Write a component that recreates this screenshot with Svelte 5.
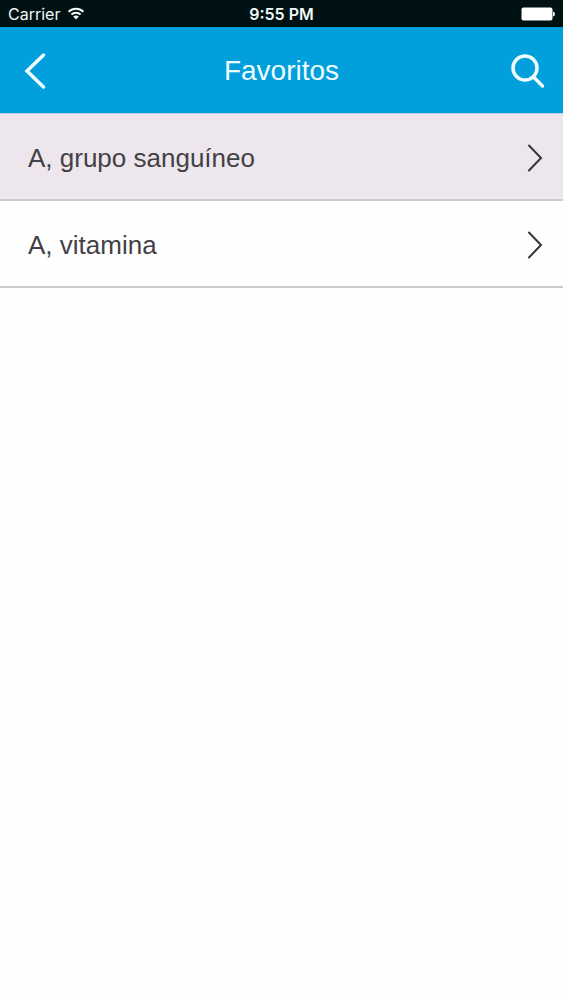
<script>
  // Lista de favoritos guardados
  let favoritos = [
    { id: 1, nombre: "A, grupo sanguíneo", activo: true },
    { id: 2, nombre: "A, vitamina", activo: false },
  ];

  let titulo = "Favoritos";
  let hora = "9:55 PM";
</script>

<div class="estado">
  <div class="operador">
    <span>Carrier</span>
    <svg class="wifi" viewBox="0 0 18 13" width="18" height="13" aria-hidden="true">
      <path d="M1.6 4.7 C5.8 0.7 12.2 0.7 16.4 4.7" />
      <path d="M4.4 7.5 C7 5.1 11 5.1 13.6 7.5" />
      <path class="punto" d="M6.2 9.5 C7.8 8.2 10.2 8.2 11.8 9.5 L9 12.5 Z" />
    </svg>
  </div>
  <span class="hora">{hora}</span>
  <svg class="bateria" viewBox="0 0 34 14" width="34" height="14" aria-hidden="true">
    <rect x="0.5" y="0.5" width="31" height="13" rx="2" />
    <path d="M32 4.5 Q34 5 34 7 Q34 9 32 9.5 Z" />
  </svg>
</div>

<header>
  <button aria-label="Volver">
    <svg viewBox="0 0 36 36" width="36" height="36">
      <path d="M26.500 2 L10 18 L26.500 34" />
    </svg>
  </button>
  <h1>{titulo}</h1>
  <button aria-label="Buscar">
    <svg viewBox="0 0 36 36" width="36" height="36">
      <circle cx="15" cy="15" r="12" />
      <path d="M23.500 24 L32.500 33" />
    </svg>
  </button>
</header>

<main>
  <ul>
    {#each favoritos as favorito (favorito.id)}
      <li>
        <a href="#{favorito.id}" class:activo={favorito.activo}>
          <span>{favorito.nombre}</span>
          <svg viewBox="0 0 16 28" width="16" height="28" aria-hidden="true">
            <path d="M2 1.500 L14 14 L2 26.500" />
          </svg>
        </a>
      </li>
    {/each}
  </ul>
</main>

<style>
  :global(body) {
    margin: 0;
    background: #fdfefd;
    font-family: "Liberation Sans", Arial, sans-serif;
  }

  .estado {
    display: grid;
    grid-template-columns: 1fr auto 1fr;
    align-items: center;
    height: 27px;
    padding: 0 8px;
    background: #001114;
    color: #f0f8f8;
    font-family: Inter, sans-serif;
    font-size: 16px;
    line-height: 25px;
  }

  .estado span {
    padding-top: 2px;
  }

  .operador {
    display: flex;
    align-items: center;
    gap: 7px;
  }

  .hora {
    font-weight: 600;
  }

  .wifi {
    fill: none;
    stroke: #f0f8f8;
    stroke-width: 2;
  }

  .punto {
    fill: #f0f8f8;
    stroke: none;
  }

  .bateria {
    justify-self: end;
    fill: #fff;
  }

  header {
    box-sizing: border-box;
    display: flex;
    align-items: center;
    justify-content: space-between;
    height: 87px;
    padding: 2px 17px 0;
    border-bottom: 1px solid #bccdd9;
    background: #019fdb;
    color: #effcff;
  }

  h1 {
    margin: 0;
    font-size: 28px;
    font-weight: normal;
    line-height: 32px;
  }

  button {
    display: flex;
    padding: 0;
    border: none;
    background: none;
    color: inherit;
    cursor: pointer;
  }

  button svg {
    fill: none;
    stroke: currentColor;
    stroke-width: 3.500;
    stroke-linecap: round;
  }

  ul {
    margin: 0;
    padding: 0;
    list-style: none;
  }

  a {
    box-sizing: border-box;
    display: flex;
    align-items: center;
    justify-content: space-between;
    height: 87px;
    padding: 3px 20px 0 28px;
    border-bottom: 2px solid #cccacc;
    color: #434145;
    font-size: 26px;
    line-height: 32px;
    text-decoration: none;
  }

  a.activo {
    background: #eee6ed;
  }

  a svg {
    fill: none;
    stroke: #38343a;
    stroke-width: 2;
    stroke-linecap: round;
  }
</style>
